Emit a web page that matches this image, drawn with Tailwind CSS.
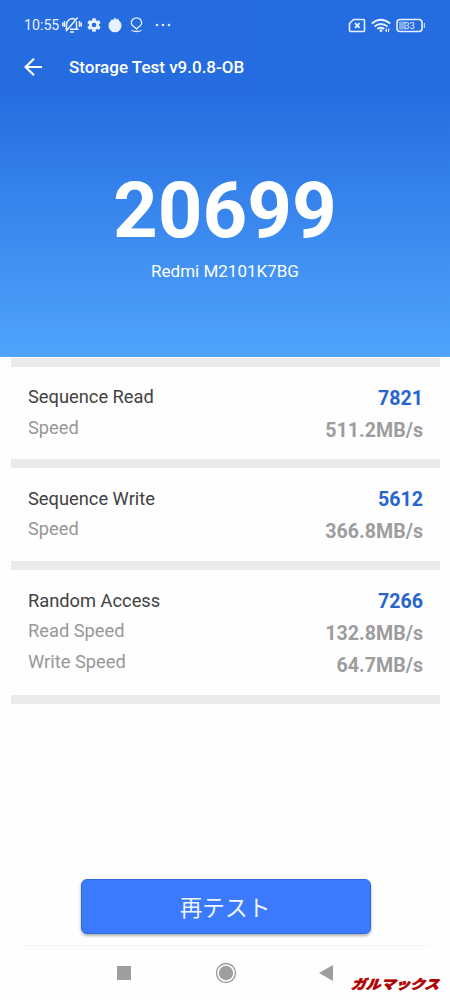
<!DOCTYPE html>
<html lang="ja">
<head>
<meta charset="utf-8">
<meta name="viewport" content="width=device-width, initial-scale=1">
<title>Storage Test</title>
<script src="https://cdn.jsdelivr.net/npm/@tailwindcss/browser@4"></script>
</head>
<body class="bg-white font-['Roboto','Noto_Sans_CJK_JP',sans-serif]">
<div class="flex h-[1000px] w-[450px] flex-col overflow-hidden bg-[#fefefe]">
  <header class="flex h-[357px] shrink-0 flex-col bg-linear-to-b from-[#256ce0] from-25% to-[#50a4fc] text-white">
    <div class="flex h-[50px] items-center pl-6 text-[#e8f1ff]">
      <span class="w-[38px] whitespace-nowrap text-[14.2px] leading-[50px]">10:55</span>
      <svg class="h-[18px] w-[20px]" viewBox="0 0 20 18" fill="none" stroke="currentColor" stroke-width="1.5">
        <path d="M4.500 12.500V8.500a5 5 0 0 1 2-4.200Q7.500 3 10 2.500M14.500 5.500V12.500l1.500 1M3.500 13.200h2M8 13.200h8.500M8 16h4M15.700 1.500 4 15.200M.7 6.500v4M2.500 5v6M17.500 5v6M19.300 6.500v4M10 2.500q2 0 3 1"/>
      </svg>
      <svg class="ml-[5px] h-[14px] w-[14px]" viewBox="2 2 20 20" fill="currentColor"><path d="M19.140 12.940c.04-.3.060-.610.060-.940s-.02-.640-.07-.940l2.030-1.580a.49.49 0 0 0 .12-.610l-1.920-3.320a.49.49 0 0 0-.590-.220l-2.390.960a7 7 0 0 0-1.620-.940l-.360-2.540a.48.48 0 0 0-.480-.410h-3.840a.47.47 0 0 0-.470.410l-.360 2.540c-.590.240-1.130.570-1.620.940l-2.390-.960a.47.47 0 0 0-.590.220L2.740 8.870a.47.47 0 0 0 .12.610l2.030 1.580a6 6 0 0 0-.020 1.880l-2.030 1.580a.49.49 0 0 0-.120.610l1.920 3.320c.12.220.370.290.590.220l2.390-.960c.5.380 1.030.7 1.620.940l.360 2.540c.050.240.240.410.480.410h3.840c.240 0 .440-.170.470-.410l.360-2.540a7 7 0 0 0 1.620-.940l2.390.960c.220.080.470 0 .590-.220l1.920-3.320a.47.47 0 0 0-.120-.610zM12 15.300a3.300 3.300 0 1 1 0-6.600 3.300 3.300 0 0 1 0 6.600"/></svg>
      <svg class="ml-[7px] h-[16px] w-[14px]" viewBox="0 0 14 16" fill="currentColor"><path d="M3 3.500 4 2l1 1.200L7 .5l1.500 2.200L10 1.500l1 2a6.500 6.500 0 0 1 2.500 5.300A6.500 6.500 0 0 1 .5 8.800 6.500 6.500 0 0 1 3 3.500"/></svg>
      <svg class="ml-[8px] h-[16px] w-[13px]" viewBox="0 0 13 16" fill="none" stroke="currentColor" stroke-width="1.300"><path d="M5 10.500C2.500 9 1.300 8 1.300 6a5.200 5.200 0 0 1 10.400 0c0 2-1.200 3-3.700 4.500L6.500 12zM1.500 13.500q5 2 10 0"/></svg>
      <svg class="ml-[12px] h-[4px] w-[16px]" viewBox="0 0 16 4" fill="currentColor"><circle cx="2" cy="2" r="1.300"/><circle cx="8" cy="2" r="1.300"/><circle cx="14" cy="2" r="1.300"/></svg>
      <svg class="ml-auto h-[15px] w-[18px]" viewBox="0 0 18 15" fill="none" stroke="currentColor" stroke-width="1.600"><path d="M5.500 1.500H15.500q1 0 1 1v10q0 1-1 1H2.500q-1 0-1-1V5.500z" stroke-linejoin="round"/><path d="m7 5.200 4.600 4.600m0-4.600L7 9.800" stroke-width="1.900"/></svg>
      <svg class="ml-[5px] h-[15px] w-[20px]" viewBox="0 0 20 15" fill="none" stroke="currentColor" stroke-width="2"><path d="M.8 5.500q9-7.500 18.400 0M3.500 8.500q6.300-5 13 0M6.300 11q3.500-2.500 7 0"/><circle cx="10" cy="12.700" r="1.400" fill="currentColor" stroke="none"/><path d="M15.500 10.500V14M17.500 10.500V14M14 12.500h1M18.500 11.500h-1" stroke-width="1"/></svg>
      <svg class="mr-[24px] ml-[5px] h-[15px] w-[30px] font-['Roboto',sans-serif]" viewBox="0 0 30 15" fill="currentColor"><rect x="3" y="3.500" width="7" height="8" fill="#7fa9ee"/><rect x="1" y="1.500" width="25" height="12" rx="3" fill="none" stroke="currentColor" stroke-width="1.600"/><path d="M27.800 5h1v5h-1z"/><text x="13.500" y="11" text-anchor="middle" font-size="9.500">33</text></svg>
    </div>
    <div class="flex h-[35px] items-center pl-6">
      <svg class="h-5 w-[19px]" viewBox="0 0 19 20" fill="none" stroke="currentColor" stroke-width="2.200"><path d="M18 9H1.700M10 .8 1.600 9l8.400 8.200"/></svg>
      <h1 class="ml-[26px] text-[17px] font-medium whitespace-nowrap">Storage Test v9.0.8-OB</h1>
    </div>
    <div class="mt-[86px] text-center text-[78px] leading-[80px] font-bold">20699</div>
    <div class="mt-[8px] text-center text-[17px] leading-6">Redmi M2101K7BG</div>
  </header>
  <main class="mx-[11px] mt-px flex h-[346px] w-[429px] flex-col text-[18.300px]">
    <div class="h-[9px] bg-[#eaeaea]"></div>
    <section class="flex h-[92px] justify-between px-[17px] pt-[15px]">
      <div class="leading-[30.500px] text-[#979797]"><h2 class="text-[#424242]">Sequence Read</h2><p>Speed</p></div>
      <div class="pt-px text-right text-[19.600px] leading-[32px] font-bold text-[#9d9d9d]"><p class="text-[#2765cd]">7821</p><p>511.2MB/s</p></div>
    </section>
    <div class="h-[9px] bg-[#eaeaea]"></div>
    <section class="flex h-[93px] justify-between px-[17px] pt-[16px]">
      <div class="leading-[30px] text-[#979797]"><h2 class="text-[#424242]">Sequence Write</h2><p>Speed</p></div>
      <div class="text-right text-[19.600px] leading-[32px] font-bold text-[#9d9d9d]"><p class="text-[#2765cd]">5612</p><p>366.8MB/s</p></div>
    </section>
    <div class="h-[9px] bg-[#eaeaea]"></div>
    <section class="flex h-[125px] justify-between px-[17px] pt-[15px]">
      <div class="pt-[0.500px] leading-[30.500px] text-[#979797]"><h2 class="text-[#424242]">Random Access</h2><p>Read Speed</p><p>Write Speed</p></div>
      <div class="pt-px text-right text-[19.600px] leading-[32px] font-bold text-[#9d9d9d]"><p class="text-[#2765cd]">7266</p><p>132.8MB/s</p><p>64.7MB/s</p></div>
    </section>
    <div class="h-[9px] bg-[#eaeaea]"></div>
  </main>
  <button class="mt-[175px] ml-[81px] h-[55px] w-[290px] shrink-0 rounded-[6px] border border-[#2f6bdc] bg-[#3b7afc] pt-[2px] pr-[2px] font-['Noto_Sans_CJK_JP',sans-serif] text-[22.700px] font-normal text-[#eef5ff] shadow-[0_2px_3px_rgba(0,0,0,0.3)]">再テスト</button>
  <div class="mx-[22px] mt-[11px] h-px shrink-0 bg-[#f3f3f3]"></div>
  <nav class="flex h-[54px] shrink-0 pl-[117px] text-[#9e9e9e]">
    <div class="mt-[20px] h-[14px] w-[14px] bg-current"></div>
    <svg class="mt-[16px] ml-[84px] h-[22px] w-[22px]" viewBox="0 0 22 22"><circle cx="11" cy="11" r="9.500" fill="none" stroke="currentColor" stroke-width="1.400"/><circle cx="11" cy="11" r="7.200" fill="currentColor"/></svg>
    <svg class="mt-[19px] ml-[82px] h-[16px] w-[14px]" viewBox="0 0 14 16" fill="currentColor"><path d="M0 8 14 0v16z"/></svg>
    <div class="mt-[31px] ml-[18px] origin-left scale-x-[1.140] -skew-x-[18deg] font-['Noto_Sans_CJK_JP',sans-serif] text-[13px] leading-[14px] font-black tracking-[-0.100px] whitespace-nowrap text-[#b00000] [-webkit-text-stroke:0.600px_#b00000]">ガルマックス</div>
  </nav>
</div>
</body>
</html>
